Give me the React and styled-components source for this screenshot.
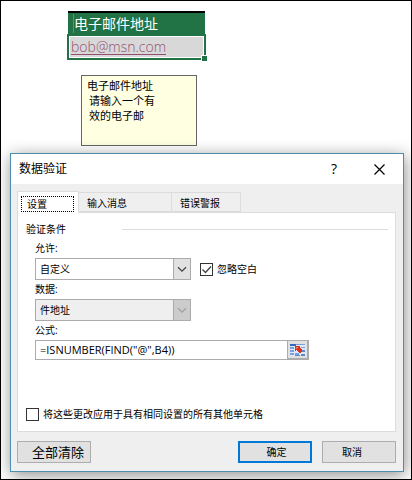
import React, { useState } from 'react'
import styled, { createGlobalStyle } from 'styled-components'

const GlobalStyle = createGlobalStyle`
  * {
    box-sizing: border-box;
  }
  body {
    margin: 0;
    background: #fff;
    color: #000;
    font-family: 'Open Sans', 'Noto Sans CJK SC', sans-serif;
    font-size: 10px;
    line-height: 14px;
  }
  button,
  input,
  select {
    margin: 0;
    color: inherit;
    font: inherit;
  }
`

const Page = styled.div`
  min-height: 100vh;
  padding: 10px 7px 7px 9px;
  border: 1px solid #000;
  overflow: hidden;
`

// Planilha

const Sheet = styled.table`
  width: 139px;
  margin-left: 57px;
  border-collapse: separate;
  border-spacing: 0;
`

const HeaderCell = styled.th`
  padding: 0 1px;
  text-align: left;
  font-size: 14px;
  font-weight: 400;
  line-height: 21px;
  color: #fff;
`

const HeaderText = styled.div`
  padding-left: 5px;
  border-top: 2px solid #000;
  background: #217346;

  span {
    border-left: 1px solid #2a9db5;
  }
`

const SelectedCell = styled.td`
  position: relative;
  height: 26px;
  padding: 1px;
  border: 2px solid #217346;
`

const CellLink = styled.a`
  display: block;
  height: 20px;
  padding-left: 1px;
  background: #d8d8d8;
  color: #954f72;
  font-family: 'Open Sans', sans-serif;
  font-size: 14px;
  line-height: 20px;
  font-weight: 300;
  text-underline-offset: 2px;
`

const FillHandle = styled.span`
  position: absolute;
  right: -4px;
  bottom: -4px;
  width: 7px;
  height: 7px;
  border: 1px solid #fff;
  background: #217346;
`

const Note = styled.aside`
  width: 116px;
  height: 71px;
  margin: 15px 0 7px 71px;
  padding: 2px 5px;
  border: 1px solid #666;
  background: #ffffe1;
  font-size: 11px;
  line-height: 15px;

  p {
    margin: 0;
    padding-left: 2px;
  }
`

// Caixa de dialogo

const Dialog = styled.section`
  border: 1px solid #4a90ac;
  background: #efefef;
  box-shadow: 1px 3px 15px rgba(0, 0, 0, 0.45);
`

const TitleBar = styled.header`
  display: flex;
  align-items: center;
  height: 30px;
  padding: 0 12px 0 8px;
  background: #fff;
`

const Title = styled.h1`
  flex: 1;
  margin: 0;
  font-size: 12px;
  font-weight: 400;
`

const TitleButton = styled.button`
  display: flex;
  align-items: center;
  justify-content: center;
  width: 24px;
  height: 20px;
  margin-left: 21px;
  padding: 0;
  border: 0;
  background: none;
  font-size: 14px;
`

const Content = styled.div`
  padding: 7px 7px 8px 6px;
`

const Tabs = styled.div`
  display: flex;
  align-items: flex-end;
  height: 21px;
`

const Tab = styled.button`
  width: ${({ $width }) => $width}px;
  height: ${({ $active }) => ($active ? 22 : 20)}px;
  margin: ${({ $active }) => ($active ? '0 0 -1px' : '0 0 0 -1px')};
  padding: ${({ $active }) => ($active ? '3px 4px 1px 3px' : '2px 8px 0')};
  border: 1px solid #dcdcdc;
  border-bottom: ${({ $active }) => ($active ? 0 : '1px solid #dcdcdc')};
  background: ${({ $active }) => ($active ? '#fff' : '#efefef')};
  text-align: left;
  z-index: ${({ $active }) => ($active ? 1 : 0)};

  span {
    display: block;
    padding: ${({ $active }) => ($active ? '0 5px' : 0)};
    border: ${({ $active }) => ($active ? '1px dotted #000' : 0)};
  }
`

const Panel = styled.div`
  display: flex;
  flex-direction: column;
  height: 220px;
  padding: 9px 7px 10px 8px;
  border: 1px solid #dcdcdc;
  background: #fff;
`

const GroupTitle = styled.h2`
  display: flex;
  align-items: center;
  gap: 56px;
  margin: 0 0 5px;
  font-size: 10px;
  font-weight: 400;

  &::after {
    content: '';
    flex: 1;
    height: 1px;
    background: #dcdcdc;
  }
`

const Fields = styled.div`
  display: flex;
  flex-direction: column;
  flex: 1;
  padding-left: 9px;
`

const Label = styled.label`
  height: 14px;
  margin-bottom: 3px;
`

const FieldRow = styled.div`
  display: flex;
  align-items: center;
  gap: 9px;
  margin-bottom: 2px;
`

const SelectBox = styled.div`
  display: grid;
  grid-template-columns: 1fr 18px;
  width: 156px;
  height: 22px;

  select {
    grid-area: 1 / 1 / 2 / 3;
    padding: 0 4px 1px;
    appearance: none;
    border: 1px solid #ababab;
    border-radius: 0;
    background: ${({ $disabled }) => ($disabled ? '#efefef' : '#fff')};
    opacity: 1;
  }

  svg {
    grid-area: 1 / 2 / 2 / 3;
    width: 18px;
    height: 22px;
    border: 1px solid #ababab;
    background: ${({ $disabled }) => ($disabled ? '#ccc' : '#e1e1e1')};
    color: ${({ $disabled }) => ($disabled ? '#a0a0a0' : '#444')};
    pointer-events: none;
  }
`

const CheckLabel = styled.label`
  display: flex;
  align-items: center;
  gap: 4px;
`

const CheckSquare = styled.span`
  display: grid;
  width: 13px;
  height: 13px;

  input {
    grid-area: 1 / 1;
    width: 13px;
    height: 13px;
    appearance: none;
    border: 1px solid #333;
    background: #fff;
  }

  svg {
    grid-area: 1 / 1;
    z-index: 1;
    pointer-events: none;
  }
`

const FormulaRow = styled.div`
  display: flex;
  width: 274px;
  height: 20px;
  border: 1px solid #ababab;

  input {
    flex: 1;
    min-width: 0;
    padding: 0 4px;
    border: 0;
    background: #fff;
    font-size: 11px;
  }
`

const RangeButton = styled.button`
  display: flex;
  align-items: center;
  justify-content: center;
  width: 21px;
  padding: 0;
  border: 1px solid #ababab;
  border-width: 0 1px 1px;
  background: #e1e1e1;
`

const Footer = styled.footer`
  display: flex;
  gap: 10px;
  margin-top: 9px;
`

const Button = styled.button`
  width: 74px;
  height: 22px;
  padding: ${({ $pad }) => $pad || '0 0 1px'};
  border: ${({ $primary }) => ($primary ? '2px solid #0078d7' : '1px solid #adadad')};
  background: #e1e1e1;
  font-size: ${({ $large }) => ($large ? 13 : 10)}px;
  line-height: 14px;
  white-space: nowrap;

  &:first-child {
    margin-right: auto;
  }
`

const Chevron = () => (
  <svg viewBox='0 0 18 22' fill='none' stroke='currentColor' strokeWidth='1.4'>
    <path d='M4.5 9l4.5 4.5L13.5 9' />
  </svg>
)

const RangeIcon = () => (
  <svg width='16' height='14' viewBox='0 0 16 14' shapeRendering='crispEdges'>
    <path fill='#dce8f7' d='M0 1h16v12H0z' />
    <path fill='#3a66b8' d='M0 1h6v2H0z' />
    <path fill='#7ba0dc' d='M6 1h9v1H6zM0 4h4v2H0zM11 4h4v1h-4zM0 7h4v2H0zM0 10h4v2H0zM5 10h4v2H5z' />
    <path fill='#5b87cc' d='M12 7h3v2h-3zM11 11h4v2h-4zM5 12h5v1H5z' />
    <path fill='#d9341f' d='M5 3h5v2h1v1h1v3h-1v1H9V9H8V8H7V7H6v1H5z' />
    <path fill='#f07a60' d='M6 4h2v1H7v1H6z' />
  </svg>
)

const Check = ({ label, checked, onChange }) => (
  <CheckLabel>
    <CheckSquare>
      <input type='checkbox' checked={checked} onChange={onChange} />
      {checked && (
        <svg width='13' height='13' fill='none' stroke='#444' strokeWidth='1.4'>
          <path d='M2.5 6.5l3 3 5.5-6' />
        </svg>
      )}
    </CheckSquare>
    {label}
  </CheckLabel>
)

const tabs = [
  { name: '设置', width: 62 },
  { name: '输入消息', width: 94 },
  { name: '错误警报', width: 70 },
]

const App = () => {
  const [tab, setTab] = useState(0)
  const [ignoreBlank, setIgnoreBlank] = useState(true)
  const [applyAll, setApplyAll] = useState(false)

  return (
    <Page>
      <GlobalStyle />
      <Sheet>
        <thead>
          <tr>
            <HeaderCell>
              <HeaderText>
                <span>电子邮件地址</span>
              </HeaderText>
            </HeaderCell>
          </tr>
        </thead>
        <tbody>
          <tr>
            <SelectedCell>
              <CellLink href='mailto:bob@msn.com'>bob@msn.com</CellLink>
              <FillHandle />
            </SelectedCell>
          </tr>
        </tbody>
      </Sheet>
      <Note>
        <div>电子邮件地址</div>
        <p>
          请输入一个有
          <br />
          效的电子邮
        </p>
      </Note>

      <Dialog role='dialog' aria-labelledby='title'>
        <TitleBar>
          <Title id='title'>数据验证</Title>
          <TitleButton>?</TitleButton>
          <TitleButton aria-label='关闭'>
            <svg width='11' height='11' stroke='#000' strokeWidth='1.2'>
              <path d='M.5.5l10 10M10.5.5l-10 10' />
            </svg>
          </TitleButton>
        </TitleBar>
        <Content>
          <Tabs role='tablist'>
            {tabs.map(({ name, width }, i) => (
              <Tab
                key={name}
                role='tab'
                aria-selected={tab === i}
                $active={tab === i}
                $width={width}
                onClick={() => setTab(i)}
              >
                <span>{name}</span>
              </Tab>
            ))}
          </Tabs>
          <Panel role='tabpanel'>
            <GroupTitle>验证条件</GroupTitle>
            <Fields>
              <Label htmlFor='allow'>允许:</Label>
              <FieldRow>
                <SelectBox>
                  <select id='allow'>
                    <option>自定义</option>
                  </select>
                  <Chevron />
                </SelectBox>
                <Check
                  label='忽略空白'
                  checked={ignoreBlank}
                  onChange={() => setIgnoreBlank(!ignoreBlank)}
                />
              </FieldRow>
              <Label htmlFor='data'>数据:</Label>
              <FieldRow>
                <SelectBox $disabled>
                  <select id='data' disabled>
                    <option>件地址</option>
                  </select>
                  <Chevron />
                </SelectBox>
              </FieldRow>
              <Label htmlFor='formula'>公式:</Label>
              <FormulaRow>
                <input id='formula' type='text' defaultValue='=ISNUMBER(FIND("@",B4))' />
                <RangeButton aria-label='公式'>
                  <RangeIcon />
                </RangeButton>
              </FormulaRow>
            </Fields>
            <Check
              label='将这些更改应用于具有相同设置的所有其他单元格'
              checked={applyAll}
              onChange={() => setApplyAll(!applyAll)}
            />
          </Panel>
          <Footer>
            <Button $large $pad='0 0 1px 8px'>全部清除</Button>
            <Button $primary $pad='0 0 1px 3px'>确定</Button>
            <Button $pad='0 14px 1px 0'>取消</Button>
          </Footer>
        </Content>
      </Dialog>
    </Page>
  )
}

export default App
